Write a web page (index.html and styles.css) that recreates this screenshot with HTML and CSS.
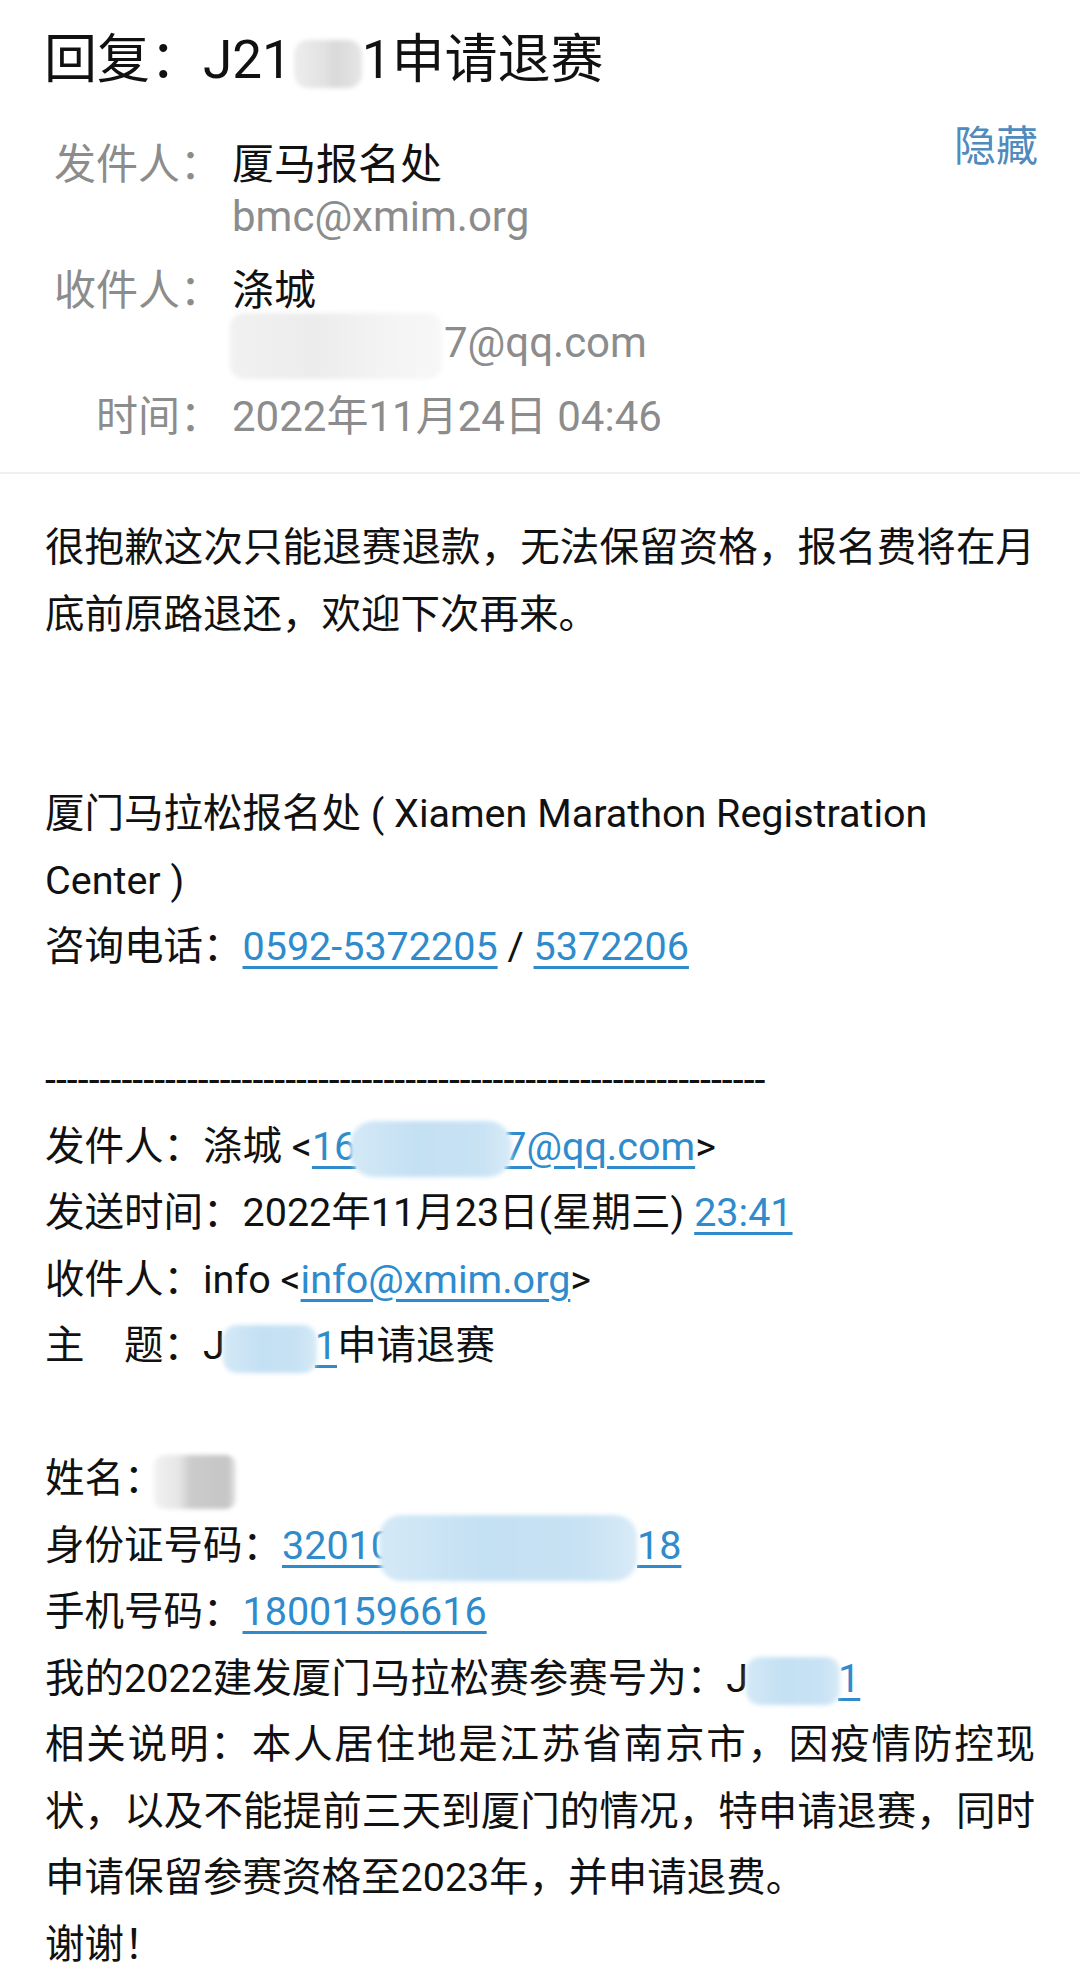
FILE: index.html
```html
<!DOCTYPE html>
<html lang="zh-CN">
<head>
<meta charset="utf-8">
<title>回复：J21 1申请退赛</title>
<link rel="stylesheet" href="styles.css">
</head>
<body>
<div class="page">
  <h1 class="title">回复：J21<span class="blob blob-title"></span>1申请退赛</h1>

  <div class="meta">
    <div class="meta-grid">
      <div class="label">发件人：</div>
      <div class="value">
        <div class="name">厦马报名处</div>
        <div class="addr">bmc@xmim.org</div>
      </div>
      <div class="label">收件人：</div>
      <div class="value">
        <div class="name">涤城</div>
        <div class="addr"><span class="blob blob-addr"></span>7@qq.com</div>
      </div>
      <div class="label">时间：</div>
      <div class="value addr">2022年11月24日 04:46</div>
    </div>
    <a class="hide">隐藏</a>
  </div>

  <div class="body">
    <p>很抱歉这次只能退赛退款，无法保留资格，报名费将在月底前原路退还，欢迎下次再来。</p>
    <p class="blank"></p>
    <p class="blank"></p>
    <p class="plain">厦门马拉松报名处 ( Xiamen Marathon Registration Center )</p>
    <p>咨询电话：<a>0592-5372205</a> / <a>5372206</a></p>
    <p class="blank"></p>
    <p class="plain dashes">------------------------------------------------------------------</p>
    <p>发件人：涤城 &lt;<a>16<span class="blob blob-blue blob-qq"></span>7@qq.com</a>&gt;</p>
    <p>发送时间：2022年11月23日(星期三) <a>23:41</a></p>
    <p>收件人：info &lt;<a>info@xmim.org</a>&gt;</p>
    <p>主　题：J<a><span class="blob blob-blue blob-num"></span>1</a>申请退赛</p>
    <p class="blank"></p>
    <p>姓名：<span class="blob blob-name"></span></p>
    <p>身份证号码：<a>32010<span class="blob blob-blue blob-id"></span>18</a></p>
    <p>手机号码：<a>18001596616</a></p>
    <p>我的2022建发厦门马拉松赛参赛号为：J<a><span class="blob blob-blue blob-num"></span>1</a></p>
    <p>相关说明：本人居住地是江苏省南京市，因疫情防控现状，以及不能提前三天到厦门的情况，特申请退赛，同时申请保留参赛资格至2023年，并申请退费。</p>
    <p>谢谢！</p>
  </div>
</div>
</body>
</html>
```

FILE: styles.css
```css
* {
  box-sizing: border-box;
}

body {
  margin: 0;
  background: #ffffff;
  font-family: Roboto, "Noto Sans CJK SC", sans-serif;
  color: #111111;
}

.page {
  width: 1080px;
}

.title {
  margin: 0;
  padding: 25px 0 0 44px;
  font-size: 53px;
  line-height: 70px;
  font-weight: 400;
  color: #111111;
}

.meta {
  display: flex;
  align-items: flex-start;
  padding: 44px 42px 29px 50px;
  border-bottom: 2px solid #efefef;
}

.meta-grid {
  display: grid;
  grid-template-columns: 172px auto;
  column-gap: 10px;
  row-gap: 22px;
  font-size: 42px;
  line-height: 52px;
}

.label {
  text-align: right;
  color: #8c8c8c;
}

.name {
  color: #111111;
}

.addr {
  color: #8c8c8c;
}

.hide {
  margin-left: auto;
  margin-top: -18px;
  font-size: 42px;
  line-height: 52px;
  color: #4f8bbd;
  text-decoration: none;
}

.body {
  padding: 41px 45px 40px 45px;
  font-size: 39.5px;
  line-height: 66.5px;
}

.body p {
  margin: 0;
  text-align: justify;
}

.body p.plain {
  text-align: left;
}

.body p.blank {
  height: 66.5px;
}

.dashes {
  letter-spacing: 0;
}

.body a {
  color: #2f8bcb;
  text-decoration: underline;
  text-decoration-thickness: 3px;
  text-underline-offset: 6px;
}

.blob {
  display: inline-block;
  vertical-align: middle;
  border-radius: 14px;
  filter: blur(2px);
}

.blob-title {
  width: 68px;
  height: 48px;
  margin: -6px 0 -6px 2px;
  background: linear-gradient(90deg, #ededed 0%, #e2e2e2 45%, #d9d9d9 60%, #e6e6e6 100%);
}

.blob-addr {
  width: 212px;
  height: 66px;
  margin: -14px 2px -14px -2px;
  background: linear-gradient(90deg, #f1f1f1 0%, #ececec 40%, #f4f4f4 75%, #f7f7f7 100%);
}

.blob-blue {
  background: linear-gradient(90deg, #d4e9f7 0%, #c4e0f3 40%, #c8e2f4 80%, #d8ebf7 100%);
}

.blob-qq {
  width: 162px;
  height: 56px;
  margin: -10px -8px -10px -6px;
  border-radius: 24px;
}

.blob-num {
  width: 94px;
  height: 48px;
  margin: -6px -2px -6px -2px;
}

.blob-id {
  width: 258px;
  height: 66px;
  margin: -14px 0 -14px -14px;
  border-radius: 22px;
}

.blob-name {
  width: 82px;
  height: 54px;
  margin: -10px 0 -10px -10px;
  border-radius: 10px;
  background: linear-gradient(90deg, #f2f2f2 0%, #e6e6e6 30%, #cbcbcb 45%, #c6c6c6 90%, #e8e8e8 100%);
}
```
